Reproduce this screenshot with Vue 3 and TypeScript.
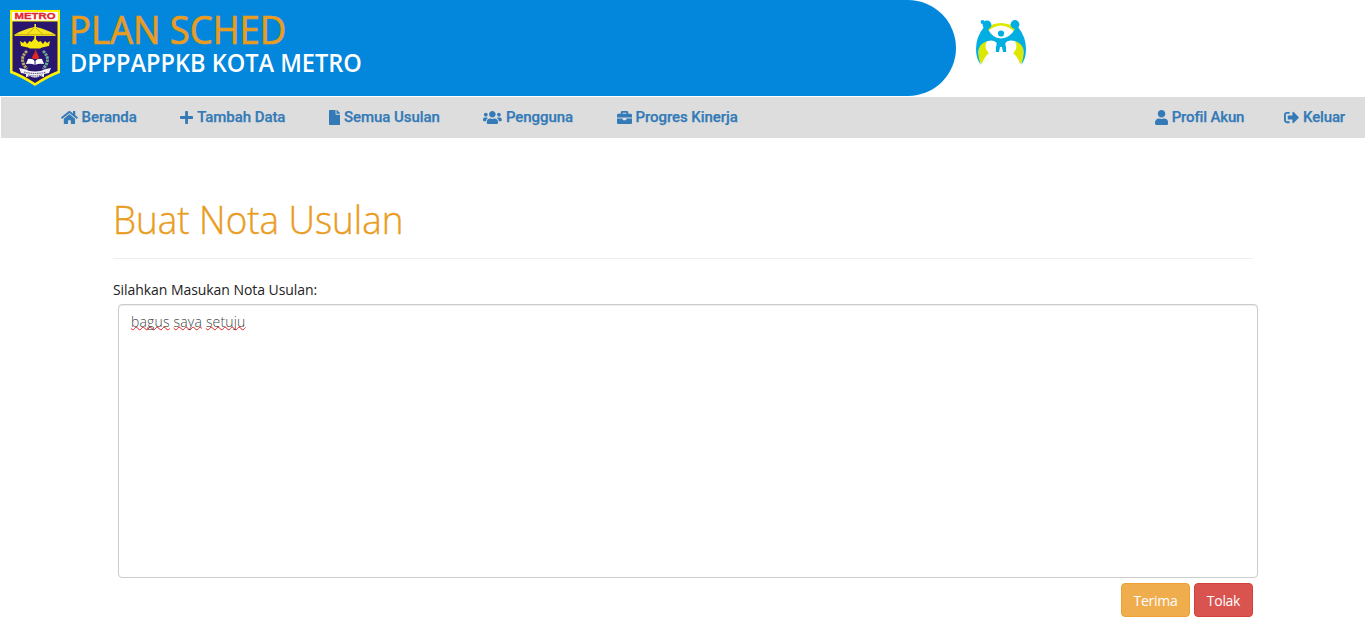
<script setup lang="ts">
import { ref } from 'vue'

interface NavItem {
  label: string
  width: number
  path: string
}

const mainLinks: NavItem[] = [
  { label: 'Beranda', width: 576, path: 'M280.37 148.26L96 300.11V464a16 16 0 0 0 16 16l112.06-.29a16 16 0 0 0 15.92-16V368a16 16 0 0 1 16-16h64a16 16 0 0 1 16 16v95.64a16 16 0 0 0 16 16.05L464 480a16 16 0 0 0 16-16V300L295.67 148.26a12.19 12.19 0 0 0-15.3 0zM571.6 251.47L488 182.56V44.05a12 12 0 0 0-12-12h-56a12 12 0 0 0-12 12v72.61L318.47 43a48 48 0 0 0-61 0L4.34 251.47a12 12 0 0 0-1.6 16.9l25.5 31A12 12 0 0 0 45.15 301l235.22-193.74a12.19 12.19 0 0 1 15.3 0L530.9 301a12 12 0 0 0 16.9-1.6l25.5-31a12 12 0 0 0-1.7-16.93z' },
  { label: 'Tambah Data', width: 448, path: 'M416 208H272V64c0-17.67-14.33-32-32-32h-32c-17.67 0-32 14.33-32 32v144H32c-17.67 0-32 14.33-32 32v32c0 17.67 14.33 32 32 32h144v144c0 17.67 14.33 32 32 32h32c17.67 0 32-14.33 32-32V304h144c17.67 0 32-14.33 32-32v-32c0-17.67-14.33-32-32-32z' },
  { label: 'Semua Usulan', width: 384, path: 'M224 136V0H24C10.7 0 0 10.7 0 24v464c0 13.3 10.7 24 24 24h336c13.3 0 24-10.7 24-24V160H248c-13.2 0-24-10.8-24-24zm160-14.1v6.1H256V0h6.1c6.4 0 12.5 2.5 17 7l97.9 98c4.5 4.5 7 10.6 7 16.9z' },
  { label: 'Pengguna', width: 640, path: 'M96 224c35.3 0 64-28.7 64-64s-28.7-64-64-64-64 28.7-64 64 28.7 64 64 64zm448 0c35.3 0 64-28.7 64-64s-28.7-64-64-64-64 28.7-64 64 28.7 64 64 64zm32 32h-64c-17.6 0-33.5 7.1-45.1 18.6 40.3 22.1 68.9 62 75.1 109.4h66c17.7 0 32-14.3 32-32v-32c0-35.3-28.7-64-64-64zm-256 0c61.9 0 112-50.1 112-112S381.9 32 320 32 208 82.1 208 144s50.1 112 112 112zm76.8 32h-8.3c-20.8 10-43.9 16-68.5 16s-47.6-6-68.5-16h-8.3C179.6 288 128 339.6 128 403.2V432c0 26.5 21.5 48 48 48h288c26.5 0 48-21.5 48-48v-28.8c0-63.6-51.6-115.2-115.2-115.2zm-223.7-13.4C161.5 263.1 145.6 256 128 256H64c-35.3 0-64 28.7-64 64v32c0 17.7 14.3 32 32 32h65.9c6.3-47.4 34.9-87.3 75.2-109.4z' },
  { label: 'Progres Kinerja', width: 512, path: 'M320 336c0 8.84-7.16 16-16 16h-96c-8.84 0-16-7.16-16-16v-48H0v144c0 25.6 22.4 48 48 48h416c25.6 0 48-22.4 48-48V288H320v48zm144-208h-80V80c0-25.6-22.4-48-48-48H176c-25.6 0-48 22.4-48 48v48H48c-25.6 0-48 22.4-48 48v80h512v-80c0-25.6-22.4-48-48-48zm-144 0H192V96h128v32z' },
]

const accountLinks: NavItem[] = [
  { label: 'Profil Akun', width: 448, path: 'M224 256c70.7 0 128-57.3 128-128S294.7 0 224 0 96 57.3 96 128s57.3 128 128 128zm89.6 32h-16.7c-22.2 10.2-46.9 16-72.9 16s-50.6-5.8-72.9-16h-16.7C60.2 288 0 348.2 0 422.4V464c0 26.5 21.5 48 48 48h352c26.5 0 48-21.5 48-48v-41.6c0-74.2-60.2-134.4-134.4-134.4z' },
  { label: 'Keluar', width: 512, path: 'M497 273L329 441c-15 15-41 4.5-41-17v-96H152c-13.3 0-24-10.7-24-24v-96c0-13.3 10.7-24 24-24h136V88c0-21.4 25.9-32 41-17l168 168c9.3 9.4 9.3 24.6 0 34zM192 436v-40c0-6.6-5.4-12-12-12H96c-17.7 0-32-14.3-32-32V160c0-17.7 14.3-32 32-32h84c6.6 0 12-5.4 12-12V76c0-6.6-5.4-12-12-12H96c-53 0-96 43-96 96v192c0 53 43 96 96 96h84c6.6 0 12-5.4 12-12z' },
]

const noteWords = ref<string[]>(['bagus', 'saya', 'setuju'])
</script>

<template>
  <header class="header">
    <div class="brand">
      <svg class="crest" width="50" height="76" viewBox="0 0 50 76">
        <path d="M0 0H50V63Q39 67 25 76Q11 67 0 63Z" fill="#fff200" />
        <path d="M2.5 11.5H47.5V61Q37 65 25 73Q13 65 2.5 61Z" fill="#29166f" />
        <rect x="2" y="2" width="46" height="8.500" fill="#fff" />
        <text x="25" y="9" text-anchor="middle" textLength="41" lengthAdjust="spacingAndGlyphs" class="crest-text">METRO</text>
        <path d="M24.400 14h1.600v3q10 2 19.500 7.500v1.500H4.500V24.500Q14 19 24.400 17z" fill="#f6e51c" />
        <path d="M5 24.800H45M17 24.500L24 18M33 24.500L26 18" stroke="#b59b16" stroke-width=".8" fill="none" />
        <path d="M24.300 26h1.700v7h-1.700z" fill="#f6e51c" />
        <path d="M10 31l3 2 2-2 2 3 2.500-3 2 1 3.500-4 3.500 4 2-1 2.500 3 2-3 2 2 3-2-1 5-7 1.500-2 1h-10l-2-1-7-1.500z" fill="#f8e80e" />
        <path d="M17 41Q8 49 17 59" stroke="#b5ab68" stroke-width="3" stroke-dasharray="2.500 .8" fill="none" />
        <path d="M33 41Q42 49 33 59" stroke="#6fab93" stroke-width="3" stroke-dasharray="2.500 .8" fill="none" />
        <path d="M25.500 39l1.500 4 2 4-1 2h-5l-1-2 2.500-4z" fill="#e02820" />
        <path d="M18 49q4-1 7 2 3-3 7-2l2 5q-5-1-9 1-4-2-9-1z" fill="#fff" />
        <path d="M25 50v5" stroke="#29166f" stroke-width="1" />
        <path d="M9 58l5 1q11 5 22 0l5-1-2 5-5 1v3l-4-1q-5 3-10 0l-4 1v-3l-5-1z" fill="#f5f3fa" />
        <path d="M14 62q11 3 22 0M18 65q7 2 14 0" stroke="#6b6488" stroke-width="1.200" stroke-dasharray="1.500 .7" fill="none" />
      </svg>
      <div class="brand-text">
        <div class="brand-title">PLAN SCHED</div>
        <div class="brand-sub">DPPPAPPKB KOTA METRO</div>
      </div>
    </div>
    <svg class="partner" width="50" height="46" viewBox="0 0 50 46">
      <path d="M8 9Q25-3 42 9L39 12Q25-1 11 12Z" fill="#dce800" />
      <path d="M3 27Q5 22 11 21L13 33Q8 37 6 44L2 39ZM47 27Q45 22 39 21L37 33Q42 37 44 44L48 39Z" fill="#dce800" />
      <path d="M8 7L12 9Q16 18 25 18.500Q34 18 39 9L42 7Q50 17 50 29Q50 39 45 45Q49 35 47 28Q44 21 35 20.500Q31 20.500 29.500 23L30.500 32H27L26 27H24L23 32H19.500L20.500 23Q19 20.500 15 20.500Q6 21 3 28Q1 36 5 45Q0 39 0 29Q0 17 8 7Z" fill="#00aee2" />
      <path d="M11 21.500Q18 20 20.500 23L19.500 32L14 34Q7 28 11 21.500ZM39 21.500Q32 20 29.500 23L30.500 32L36 34Q43 28 39 21.500Z" fill="#fff" />
      <circle cx="11" cy="4.800" r="4.400" fill="#00aee2" />
      <circle cx="6.500" cy="2" r="1.900" fill="#00aee2" />
      <circle cx="39" cy="4.500" r="4.400" fill="#00aee2" />
      <circle cx="25" cy="13.500" r="3.100" fill="#00aee2" />
    </svg>
  </header>

  <nav class="nav">
    <div class="links">
      <a v-for="item in mainLinks" :key="item.label" class="link">
        <svg class="icon" :width="(item.width * 15) / 512" height="15" :viewBox="`0 0 ${item.width} 512`"><path :d="item.path" /></svg>
        <span>{{ item.label }}</span>
      </a>
    </div>
    <div class="links account">
      <a v-for="item in accountLinks" :key="item.label" class="link">
        <svg class="icon" :width="(item.width * 15) / 512" height="15" :viewBox="`0 0 ${item.width} 512`"><path :d="item.path" /></svg>
        <span>{{ item.label }}</span>
      </a>
    </div>
  </nav>

  <main class="content">
    <h1 class="title"><span class="title-text">Buat Nota Usulan</span></h1>
    <div class="label">Silahkan Masukan Nota Usulan:</div>
    <div class="note" contenteditable="true" spellcheck="false">
      <template v-for="(word, i) in noteWords" :key="word"><template v-if="i > 0">{{ ' ' }}</template><span class="misspelt">{{ word }}</span></template>
    </div>
    <div class="actions">
      <button class="btn accept"><span>Terima</span></button>
      <button class="btn reject"><span>Tolak</span></button>
    </div>
  </main>
</template>

<style>
body {
  margin: 0;
  background: #fff;
  overflow: hidden;
}
</style>

<style scoped>
.header {
  display: flex;
  height: 96px;
  font-family: "Open Sans", "Noto Sans", sans-serif;
}
.brand {
  display: flex;
  box-sizing: border-box;
  width: 956px;
  height: 96px;
  padding: 10px;
  background: #0387dc;
  border-radius: 0 48px 48px 0;
}
.crest {
  flex: none;
}
.crest-text {
  font: bold 8.5px "Liberation Sans", sans-serif;
  fill: #e3262b;
  stroke: #e3262b;
  stroke-width: 0.3px;
}
.brand-text {
  padding-left: 9px;
  white-space: nowrap;
}
.brand-title {
  height: 38px;
  font-size: 39px;
  line-height: 38px;
  font-weight: 500;
  transform: scaleX(0.934);
  transform-origin: left;
  -webkit-text-stroke: 0.7px #e99c22;
  color: #e99c22;
}
.brand-sub {
  padding-left: 1px;
  font-size: 25px;
  line-height: 28px;
  font-weight: 600;
  transform: scaleX(0.941);
  transform-origin: left;
  color: #fff;
}
.partner {
  margin: 20px 0 0 20px;
}
.nav {
  display: flex;
  justify-content: space-between;
  box-sizing: border-box;
  height: 41px;
  margin: 1px 1px 0;
  padding: 0 20px 0 60px;
  background: #ddd;
  font-family: Roboto, sans-serif;
}
.links {
  display: flex;
  gap: 43.7px;
}
.account {
  gap: 40px;
}
.link {
  display: flex;
  align-items: center;
  gap: 3.7px;
  height: 40px;
  font-size: 15px;
  font-weight: 500;
  letter-spacing: -0.06px;
  -webkit-text-stroke: 0.25px #337ab7;
  color: #337ab7;
  white-space: nowrap;
}
.account .link {
  letter-spacing: -0.15px;
}
.icon {
  fill: #337ab7;
}
.content {
  width: 1140px;
  margin: 0 113px;
  font-family: "Open Sans", "Noto Sans", sans-serif;
}
.title {
  box-sizing: border-box;
  height: 121px;
  margin: 0;
  padding-top: 58px;
  border-bottom: 1px solid #eee;
  font-size: 39px;
  font-weight: 300;
  line-height: 46px;
  color: #e99c22;
}
.title-text {
  display: inline-block;
  transform: scaleX(0.943);
  transform-origin: left;
  -webkit-text-stroke: 0.4px #e99c22;
}
.label {
  height: 45px;
  box-sizing: border-box;
  padding-top: 20px;
  font-size: 14px;
  line-height: 21px;
  font-weight: 500;
  letter-spacing: -0.06px;
  color: #222;
}
.note {
  box-sizing: border-box;
  width: 1140px;
  height: 274px;
  margin-left: 5px;
  padding: 7px 12px;
  border: 1px solid #ccc;
  border-radius: 4px;
  box-shadow: inset 0 1px 1px rgba(0, 0, 0, 0.075);
  font-size: 14px;
  line-height: 20px;
  font-weight: 300;
  letter-spacing: 0.18px;
  color: #444;
  outline: none;
}
.misspelt {
  text-decoration: underline wavy #e62020 1px;
  text-decoration-skip-ink: none;
  text-underline-offset: -1px;
}
.actions {
  display: flex;
  justify-content: flex-end;
  gap: 4px;
  margin-top: 5px;
}
.btn {
  box-sizing: border-box;
  height: 34px;
  padding: 0;
  border: 1px solid;
  border-radius: 4px;
  font-family: inherit;
  font-size: 14px;
  letter-spacing: -0.3px;
  color: #fff;
}
.accept {
  width: 69px;
  background: #f0ad4e;
  border-color: #eea236;
}
.reject {
  width: 59px;
  background: #d9534f;
  border-color: #d43f3a;
}
</style>
